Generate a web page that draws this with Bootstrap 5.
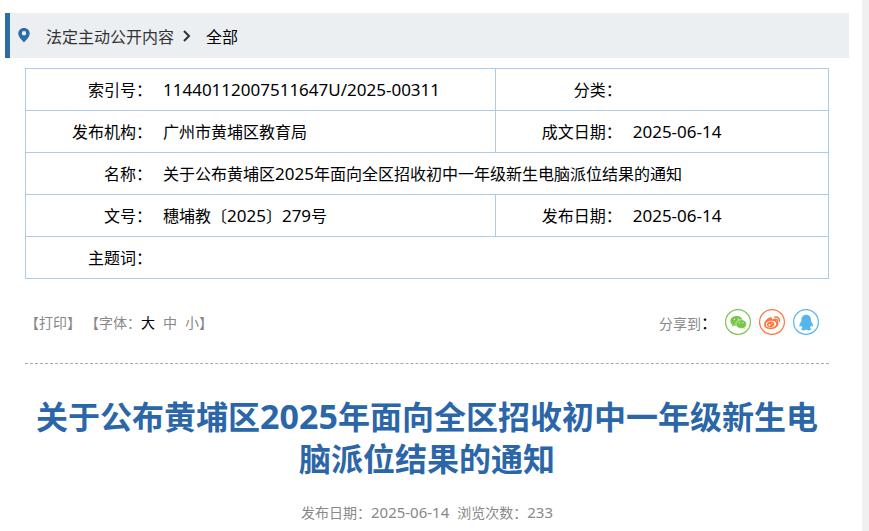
<!DOCTYPE html>
<html lang="zh-CN">
<head>
<meta charset="utf-8">
<meta name="viewport" content="width=device-width, initial-scale=1">
<title>关于公布黄埔区2025年面向全区招收初中一年级新生电脑派位结果的通知</title>
<link rel="stylesheet" href="https://cdn.jsdelivr.net/npm/bootstrap@5.3.0/dist/css/bootstrap.min.css">
<style>
  body { font-family: "Noto Sans CJK SC", sans-serif; font-size: 16px; color: #000; background: #f0f0f0; }
  .page { background: #fff; margin-right: 7px; padding: 13px 13px 0 5px; }
  .num { font-family: "Noto Sans", "Noto Sans CJK SC", sans-serif; font-size: 17px; line-height: 1; }
  .location { background: #ebeff2; border-left: 5px solid #2e6da4; height: 45px; padding-left: 8px; }
  .location a { color: #333; }
  .location .current { color: #000; }
  .article { padding: 10px 20px 0; }
  .info { border: 1px solid #aecbe5; table-layout: fixed; line-height: 24px; }
  .info tr { border-bottom: 1px solid #aecbe5; height: 42px; }
  .info th { font-weight: 400; text-align: right; padding: 0 6px 2px 0; width: 16.5%; }
  .info td { padding: 0 5px 2px; }
  .info .wide { width: 42%; }
  .info .split { border-left: 1px solid #aecbe5; }
  .tools { font-size: 14px; line-height: 20px; color: #888; border-bottom: 1px dashed #aaa; height: 85px; padding-top: 2px; }
  .tools button { color: inherit; font-size: inherit; line-height: inherit; }
  .tools .chosen { color: #000; }
  .share-mark { color: #000; font-size: 16px; }
  .share { padding-right: 10px; }
  .share svg { display: block; width: 26px; height: 26px; }
  h1 { color: #2b67a8; font-size: 32px; font-weight: 700; line-height: 42px; margin: 30px 0 0; }
  h1 .num { display: inline-block; font-size: 34px; }
  .meta { color: #888; font-size: 14px; line-height: 20px; padding: 24px 0 8px; }
  .meta .num { font-size: 15px; }
</style>
<script defer src="https://cdn.jsdelivr.net/npm/bootstrap@5.3.0/dist/js/bootstrap.bundle.min.js"></script>
</head>
<body>
<div class="page min-vh-100">
  <nav class="location d-flex align-items-center" aria-label="当前位置">
    <svg width="12" height="15" viewBox="0 0 12 15" aria-hidden="true"><path fill="#2e6da4" fill-rule="evenodd" d="M6 0C2.700 0 .3 2.400.3 5.500.3 9 4 12 6 14.600 8 12 11.700 9 11.700 5.500 11.700 2.400 9.300 0 6 0ZM6 3a2.200 2.200 0 1 1 0 4.400A2.200 2.200 0 0 1 6 3Z"/></svg>
    <a class="text-decoration-none ms-3" href="#">法定主动公开内容</a>
    <svg class="mx-2" width="12" height="12" viewBox="0 0 12 12" aria-hidden="true"><path d="M2 1 7 6 2 11" fill="none" stroke="#333" stroke-width="2"/></svg>
    <a class="current text-decoration-none ms-1" href="#">全部</a>
  </nav>

  <main class="article">
    <table class="info w-100">
      <tbody>
        <tr><th scope="row">索引号：</th><td class="wide"><span class="num">11440112007511647U/2025-00311</span></td><th scope="row" class="split">分类：</th><td></td></tr>
        <tr><th scope="row">发布机构：</th><td>广州市黄埔区教育局</td><th scope="row" class="split">成文日期：</th><td><span class="num">2025-06-14</span></td></tr>
        <tr><th scope="row">名称：</th><td colspan="3">关于公布黄埔区<span class="num">2025</span>年面向全区招收初中一年级新生电脑派位结果的通知</td></tr>
        <tr><th scope="row">文号：</th><td>穗埔教〔<span class="num">2025</span>〕<span class="num">279</span>号</td><th scope="row" class="split">发布日期：</th><td><span class="num">2025-06-14</span></td></tr>
        <tr><th scope="row">主题词：</th><td colspan="3"></td></tr>
      </tbody>
    </table>

    <div class="tools d-flex justify-content-between align-items-center">
      <div class="d-flex gap-1">
        <button type="button" class="border-0 bg-transparent p-0">【打印】</button>
        <div class="d-flex">
          <span>【字体：</span>
          <div class="d-flex gap-2">
            <button type="button" class="chosen border-0 bg-transparent p-0">大</button>
            <button type="button" class="border-0 bg-transparent p-0">中</button>
            <button type="button" class="border-0 bg-transparent p-0">小</button>
          </div>
          <span>】</span>
        </div>
      </div>
      <div class="share d-flex align-items-center gap-2">
        <span>分享到<span class="share-mark">：</span></span>
        <a href="#" aria-label="微信">
          <svg viewBox="0 0 26 26"><circle cx="13" cy="13" r="12.400" fill="#fff" stroke="#7bc549" stroke-width="1.200"/><path fill="#7bc549" d="M11.500 7C8 7 5.300 9.200 5.300 12c0 1.500.8 2.900 2.100 3.800l-.6 2 2.300-1.200c.8.200 1.500.3 2.400.3 3.500 0 6.200-2.200 6.200-5S15 7 11.500 7Z"/><path fill="#7bc549" stroke="#fff" stroke-width=".6" d="M16.300 10.700c-3.100 0-5.400 1.900-5.400 4.400s2.300 4.400 5.400 4.400c.7 0 1.300-.1 1.900-.3l2.100 1.100-.6-1.900c1.200-.8 1.900-2 1.900-3.300 0-2.500-2.300-4.400-5.300-4.400Z"/><g fill="#fff"><circle cx="9.400" cy="10.300" r=".6"/><circle cx="13.400" cy="10" r=".6"/><circle cx="14.500" cy="13.800" r=".6"/><circle cx="18" cy="13.800" r=".6"/></g></svg>
        </a>
        <a href="#" aria-label="微博">
          <svg viewBox="0 0 26 26"><circle cx="13" cy="13" r="12.400" fill="#fff" stroke="#ff763b" stroke-width="1.200"/><path fill="#ff763b" fill-rule="evenodd" d="M10.500 8.600c1.700-.7 3 0 2.500 1.800 2.200-.9 4.700-.8 4.200 1.500 1.600.5 2.300 1.400 2.300 2.600 0 3-3.700 5.700-7.800 5.700-3.900 0-6.700-1.900-6.700-4.700 0-2.500 2.800-5.900 5.500-6.900Zm1.300 3.200c-3 .2-5.200 1.800-5.100 3.900.1 1.900 2.400 3.200 5.300 3 3-.2 5.300-1.900 5.200-3.900-.1-1.900-2.500-3.200-5.400-3Z"/><path fill="#ff763b" fill-rule="evenodd" d="M12.300 12.500c-2.400-.3-4.500 1.100-4.500 3.100 0 1.600 1.400 2.800 3.400 2.800 2.300 0 4.200-1.500 4.200-3.300 0-1.400-1.200-2.400-3.100-2.600Zm-1.700 2.400a1.100 1.100 0 1 1 0 2.200 1.100 1.100 0 0 1 0-2.200Zm2.400-.8a.6.600 0 1 1 0 1.200.6.600 0 0 1 0-1.200Z"/><path fill="none" stroke="#ff763b" stroke-width="1.500" stroke-linecap="round" d="M15.900 8c3-.6 5.200 1.600 4.500 4.400M16.200 10.200c1.500-.3 2.500.7 2.100 2"/></svg>
        </a>
        <a href="#" aria-label="QQ">
          <svg viewBox="0 0 26 26"><circle cx="13" cy="13" r="12.400" fill="#fff" stroke="#56b6e7" stroke-width="1.200"/><path fill="#56b6e7" d="M13.200 5.700c-3 0-4.800 2.200-4.800 5.300v1c-.9 1.500-2 3-2 4.600 0 .7.200 1.200.5 1.200.4 0 .9-.5 1.300-1.200.2 1 .7 1.800 1.400 2.500-.9.300-1.400.7-1.400 1.200 0 .7 1.100 1.100 2.500 1.100 1.200 0 2.200-.3 2.500-.8.300.5 1.300.8 2.500.8 1.400 0 2.500-.4 2.500-1.100 0-.5-.5-.9-1.400-1.200.7-.7 1.200-1.500 1.400-2.500.4.700.9 1.200 1.300 1.200.3 0 .5-.5.5-1.200 0-1.600-1.100-3.100-2-4.600v-1c0-3.100-1.800-5.300-4.800-5.300Z"/></svg>
        </a>
      </div>
    </div>

    <h1 class="text-center">关于公布黄埔区<span class="num">2025</span>年面向全区招收初中一年级新生电脑派位结果的通知</h1>
    <div class="meta d-flex justify-content-center gap-2">
      <span>发布日期：<span class="num">2025-06-14</span></span>
      <span>浏览次数：<span class="num">233</span></span>
    </div>
  </main>
</div>
</body>
</html>
